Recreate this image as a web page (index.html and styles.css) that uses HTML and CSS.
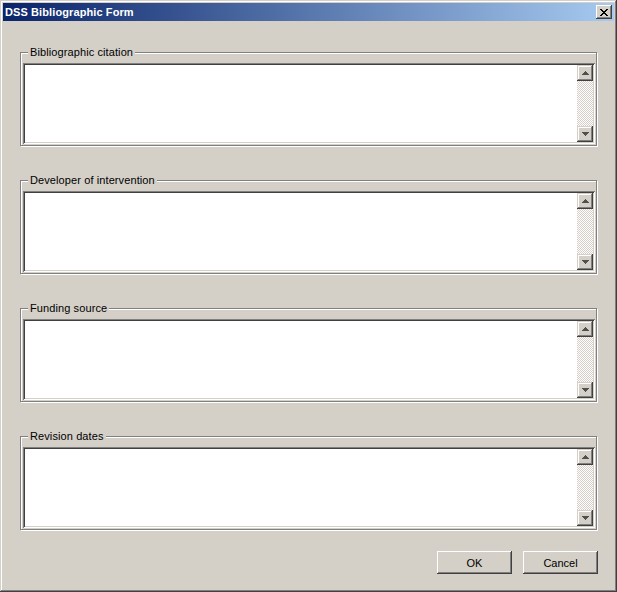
FILE: index.html
```html
<!DOCTYPE html>
<html>
<head>
<meta charset="utf-8">
<link rel="stylesheet" href="styles.css">
</head>
<body>
<div class="window">
  <div class="titlebar">
    <span class="title">DSS Bibliographic Form</span>
    <button class="close" aria-label="Close">
      <svg width="8" height="7" viewBox="0 0 8 7" shape-rendering="crispEdges"><path fill="#000" d="M0 0h2v1H0zM6 0h2v1H6zM1 1h2v1H1zM5 1h2v1H5zM2 2h4v1H2zM3 3h2v1H3zM2 4h4v1H2zM1 5h2v1H1zM5 5h2v1H5zM0 6h2v1H0zM6 6h2v1H6z"/></svg>
    </button>
  </div>
  <div class="content">
    <div class="groups">
      <fieldset class="group">
        <legend>Bibliographic citation</legend>
        <div class="textbox">
          <div class="text"></div>
          <div class="scroll">
            <div class="sbtn"><svg width="7" height="4" viewBox="0 0 7 4" shape-rendering="crispEdges"><path class="arrow" d="M3 0h1v1H3zM2 1h3v1H2zM1 2h5v1H1zM0 3h7v1H0z"/></svg></div>
            <div class="track"></div>
            <div class="sbtn"><svg width="7" height="4" viewBox="0 0 7 4" shape-rendering="crispEdges"><path class="arrow" d="M0 0h7v1H0zM1 1h5v1H1zM2 2h3v1H2zM3 3h1v1H3z"/></svg></div>
          </div>
        </div>
      </fieldset>
      <fieldset class="group">
        <legend>Developer of intervention</legend>
        <div class="textbox">
          <div class="text"></div>
          <div class="scroll">
            <div class="sbtn"><svg width="7" height="4" viewBox="0 0 7 4" shape-rendering="crispEdges"><path class="arrow" d="M3 0h1v1H3zM2 1h3v1H2zM1 2h5v1H1zM0 3h7v1H0z"/></svg></div>
            <div class="track"></div>
            <div class="sbtn"><svg width="7" height="4" viewBox="0 0 7 4" shape-rendering="crispEdges"><path class="arrow" d="M0 0h7v1H0zM1 1h5v1H1zM2 2h3v1H2zM3 3h1v1H3z"/></svg></div>
          </div>
        </div>
      </fieldset>
      <fieldset class="group">
        <legend>Funding source</legend>
        <div class="textbox">
          <div class="text"></div>
          <div class="scroll">
            <div class="sbtn"><svg width="7" height="4" viewBox="0 0 7 4" shape-rendering="crispEdges"><path class="arrow" d="M3 0h1v1H3zM2 1h3v1H2zM1 2h5v1H1zM0 3h7v1H0z"/></svg></div>
            <div class="track"></div>
            <div class="sbtn"><svg width="7" height="4" viewBox="0 0 7 4" shape-rendering="crispEdges"><path class="arrow" d="M0 0h7v1H0zM1 1h5v1H1zM2 2h3v1H2zM3 3h1v1H3z"/></svg></div>
          </div>
        </div>
      </fieldset>
      <fieldset class="group">
        <legend>Revision dates</legend>
        <div class="textbox">
          <div class="text"></div>
          <div class="scroll">
            <div class="sbtn"><svg width="7" height="4" viewBox="0 0 7 4" shape-rendering="crispEdges"><path class="arrow" d="M3 0h1v1H3zM2 1h3v1H2zM1 2h5v1H1zM0 3h7v1H0z"/></svg></div>
            <div class="track"></div>
            <div class="sbtn"><svg width="7" height="4" viewBox="0 0 7 4" shape-rendering="crispEdges"><path class="arrow" d="M0 0h7v1H0zM1 1h5v1H1zM2 2h3v1H2zM3 3h1v1H3z"/></svg></div>
          </div>
        </div>
      </fieldset>
    </div>
    <div class="actions">
      <button class="btn">OK</button>
      <button class="btn">Cancel</button>
    </div>
  </div>
</div>
</body>
</html>
```

FILE: styles.css
```css
* {
  box-sizing: border-box;
}

html, body {
  margin: 0;
  padding: 0;
  background: #d4d0c8;
}

body {
  font-family: "Liberation Sans", Arial, sans-serif;
  font-size: 11px;
  color: #000;
}

.window {
  width: 617px;
  height: 592px;
  padding: 3px;
  background: #d4d0c8;
  display: flex;
  flex-direction: column;
  box-shadow: inset -1px -1px #404040, inset 1px 1px #d4d0c8, inset -2px -2px #808080, inset 2px 2px #fff;
}

.titlebar {
  height: 18px;
  display: flex;
  align-items: center;
  justify-content: space-between;
  padding: 0 2px 0 2px;
  background: linear-gradient(90deg, #0a246a, #a6caf0);
}

.title {
  color: #fff;
  font-weight: bold;
  font-size: 11px;
  line-height: 13px;
  letter-spacing: 0.1px;
}

.close {
  width: 16px;
  height: 14px;
  padding: 0;
  border: 0;
  background: #d4d0c8;
  display: flex;
  align-items: center;
  justify-content: center;
  box-shadow: inset -1px -1px #404040, inset 1px 1px #fff, inset -2px -2px #808080, inset 2px 2px #d4d0c8;
}

.close svg {
  display: block;
}

.content {
  padding: 25px 17px 0 17px;
  display: flex;
  flex-direction: column;
}

.groups {
  display: flex;
  flex-direction: column;
  gap: 28px;
}

.group {
  margin: 0;
  min-width: 0;
  border: 1px solid #808080;
  box-shadow: inset 1px 1px #fff, 1px 1px #fff;
  padding: 4px 1px 1px 2px;
}

.group legend {
  margin-left: 5px;
  padding: 0 2px;
  background: #d4d0c8;
  line-height: 13px;
  font-size: 11px;
  letter-spacing: 0.1px;
}

.textbox {
  height: 81px;
  display: flex;
  padding: 2px;
  background: #fff;
  box-shadow: inset 1px 1px #808080, inset -1px -1px #fff, inset 2px 2px #404040, inset -2px -2px #d4d0c8;
}

.text {
  flex: 1;
}

.scroll {
  width: 16px;
  display: flex;
  flex-direction: column;
}

.sbtn {
  height: 16px;
  display: flex;
  align-items: center;
  justify-content: center;
  background: #d4d0c8;
  box-shadow: inset -1px -1px #404040, inset 1px 1px #d4d0c8, inset -2px -2px #808080, inset 2px 2px #fff;
}

.sbtn svg {
  display: block;
}

.arrow {
  fill: #505050;
}

.track {
  flex: 1;
  background-color: #d4d0c8;
  background-image: conic-gradient(#fff 25%, #d4d0c8 0 50%, #fff 0 75%, #d4d0c8 0);
  background-size: 2px 2px;
}

.actions {
  display: flex;
  justify-content: flex-end;
  gap: 11px;
  margin-top: 21px;
  margin-right: -1px;
}

.btn {
  width: 75px;
  height: 23px;
  padding: 0;
  border: 0;
  background: #d4d0c8;
  font-family: "Liberation Sans", Arial, sans-serif;
  font-size: 11px;
  color: #000;
  box-shadow: inset -1px -1px #404040, inset 1px 1px #fff, inset -2px -2px #808080, inset 2px 2px #d4d0c8;
}
```
